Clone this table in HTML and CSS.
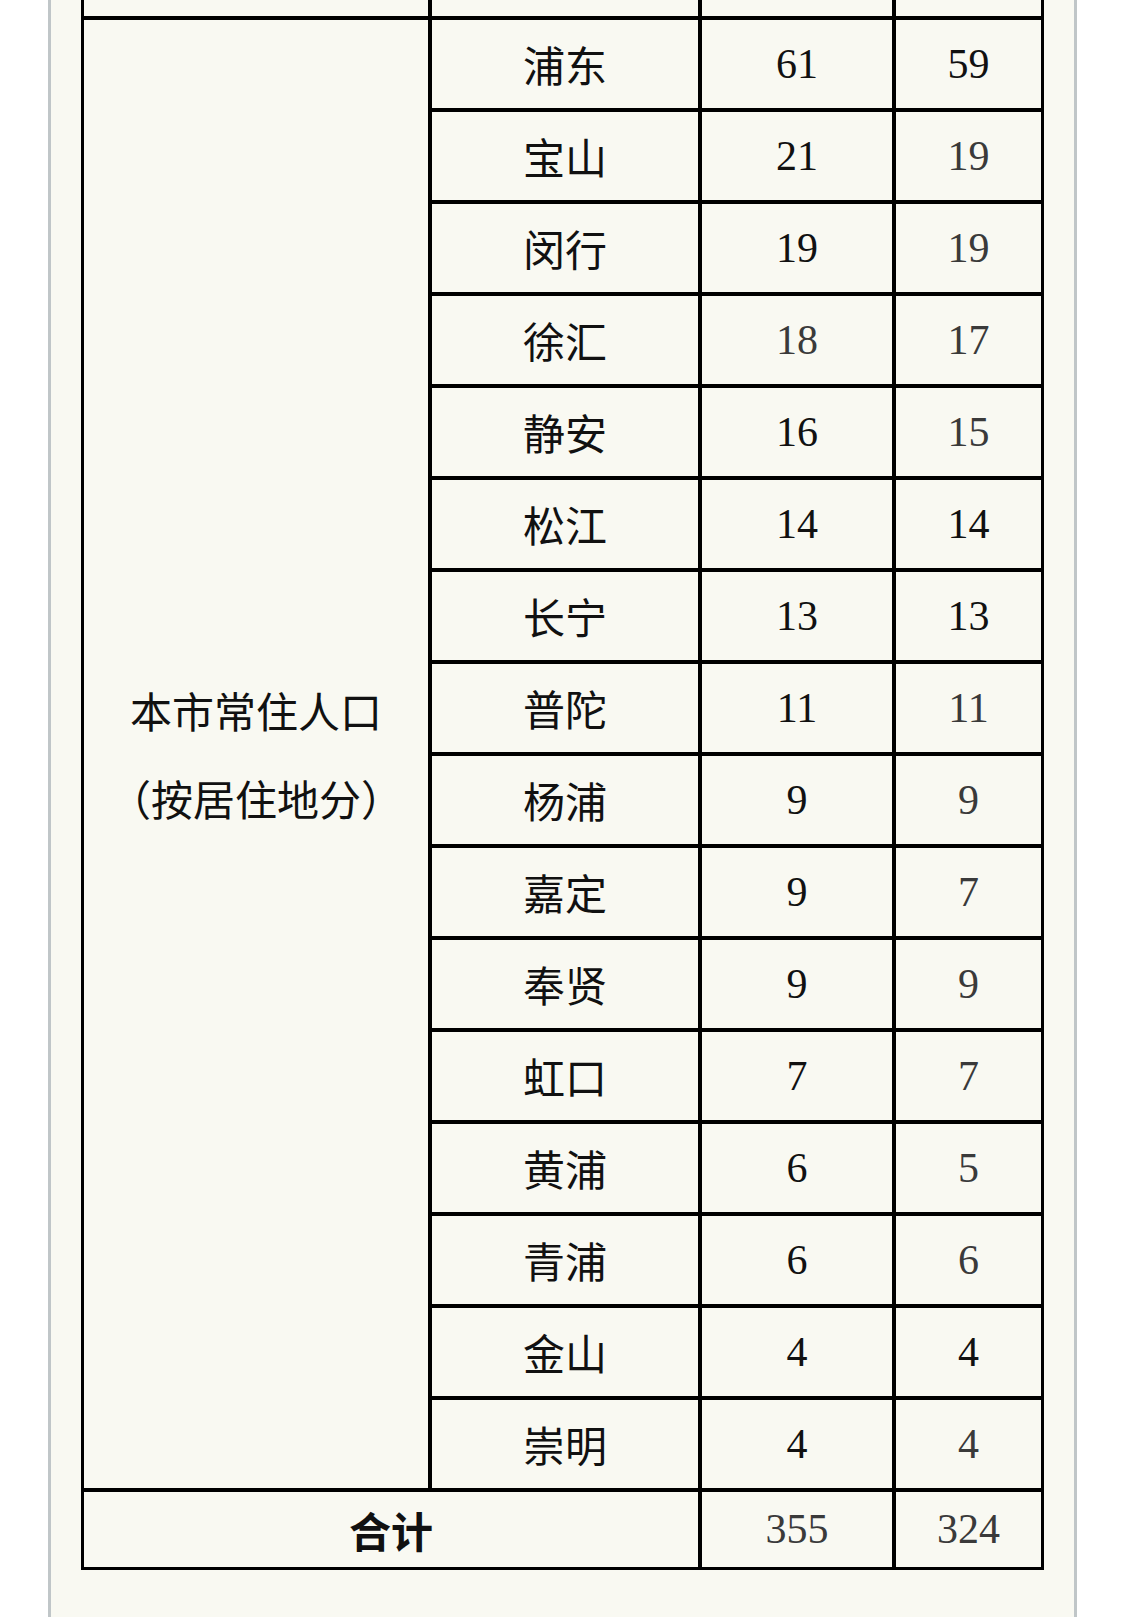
FILE: index.html
```html
<!DOCTYPE html>
<html lang="zh-CN">
<head>
<meta charset="utf-8">
<title>本市常住人口（按居住地分）</title>
<link rel="stylesheet" href="styles.css">
</head>
<body>
<div class="panel">
  <table class="data">
    <tr class="prev">
      <td class="c1">&nbsp;</td><td class="c2">&nbsp;</td><td class="c3">&nbsp;</td><td class="c4">&nbsp;</td>
    </tr>
    <tr>
      <td class="region" rowspan="16"><div class="line">本市常住人口</div><div class="line">（按居住地分）</div></td>
      <td class="name">浦东</td><td class="num">61</td><td class="num">59</td>
    </tr>
    <tr><td class="name">宝山</td><td class="num">21</td><td class="num soft">19</td></tr>
    <tr><td class="name">闵行</td><td class="num">19</td><td class="num soft">19</td></tr>
    <tr><td class="name">徐汇</td><td class="num soft">18</td><td class="num soft">17</td></tr>
    <tr><td class="name">静安</td><td class="num">16</td><td class="num soft">15</td></tr>
    <tr><td class="name">松江</td><td class="num">14</td><td class="num">14</td></tr>
    <tr><td class="name">长宁</td><td class="num">13</td><td class="num">13</td></tr>
    <tr><td class="name">普陀</td><td class="num">11</td><td class="num soft">11</td></tr>
    <tr><td class="name">杨浦</td><td class="num">9</td><td class="num soft">9</td></tr>
    <tr><td class="name">嘉定</td><td class="num">9</td><td class="num soft">7</td></tr>
    <tr><td class="name">奉贤</td><td class="num">9</td><td class="num soft">9</td></tr>
    <tr><td class="name">虹口</td><td class="num">7</td><td class="num soft">7</td></tr>
    <tr><td class="name">黄浦</td><td class="num">6</td><td class="num soft">5</td></tr>
    <tr><td class="name">青浦</td><td class="num">6</td><td class="num soft">6</td></tr>
    <tr><td class="name">金山</td><td class="num">4</td><td class="num">4</td></tr>
    <tr><td class="name">崇明</td><td class="num">4</td><td class="num soft">4</td></tr>
    <tr class="total">
      <td class="name strong" colspan="2">合计</td><td class="num soft">355</td><td class="num soft">324</td>
    </tr>
  </table>
</div>
</body>
</html>
```

FILE: styles.css
```css
html, body {
  margin: 0;
  padding: 0;
  background: #ffffff;
}

body {
  overflow: hidden;
}

.panel {
  margin: 0 48px;
  border-left: 3px solid #c0c6c8;
  border-right: 3px solid #c0c6c8;
  background: #f9f9f2;
  padding: 0 30px 120px;
}

.data {
  margin-top: -75px;
  width: 963px;
  table-layout: fixed;
  border-collapse: separate;
  border-spacing: 0;
  border: 1px solid #000;
}

.data td {
  border: 2px solid #000;
  padding: 0;
  text-align: center;
  vertical-align: middle;
  line-height: 88px;
  color: #111;
}

.prev .c1 { width: 348px; box-sizing: border-box; }
.prev .c2 { width: 270px; box-sizing: border-box; }
.prev .c3 { width: 194px; box-sizing: border-box; }
.prev .c4 { width: 149px; box-sizing: border-box; }

.prev td {
  font-size: 20px;
}

.region,
.name {
  font-family: "Noto Sans CJK SC", "Noto Sans", sans-serif;
  font-size: 42px;
}

.region .line {
  line-height: 88px;
}

.num {
  font-family: "Liberation Serif", "DejaVu Serif", serif;
  font-size: 42px;
}

.num.soft {
  color: #3a3a3a;
}

.data .total td {
  line-height: 75px;
}

.strong {
  font-weight: 700;
}
```
